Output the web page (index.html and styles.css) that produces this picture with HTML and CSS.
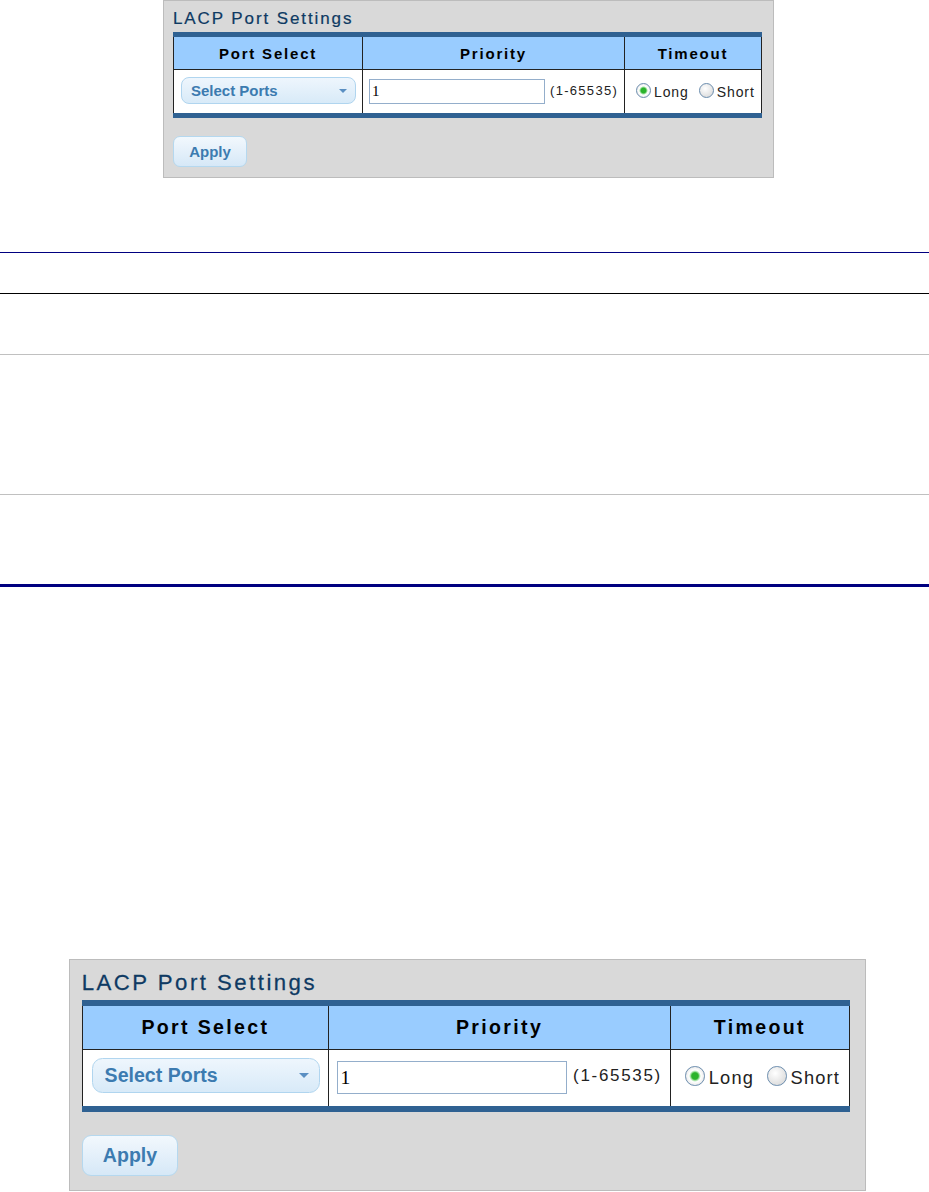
FILE: index.html
```html
<!DOCTYPE html>
<html lang="en">
  <head>
    <meta charset="UTF-8" />
    <meta name="viewport" content="width=device-width, initial-scale=1.0" />
    <title>LACP Port Settings</title>
    <link rel="stylesheet" href="styles.css">
  </head>
  <body>
    <div class="figure figure-sm">
      <div class="panel">
        <h2 class="title">LACP Port Settings</h2>
        <div class="grid-wrap">
          <div class="grid">
            <div class="head">Port Select</div>
            <div class="head">Priority</div>
            <div class="head">Timeout</div>
            <div class="cell">
              <button class="select" type="button">Select Ports</button>
            </div>
            <div class="cell">
              <input class="field" type="text" value="1" />
              <span class="range">(1-65535)</span>
            </div>
            <div class="cell">
              <label class="radio"><input type="radio" name="t1" checked />Long</label>
              <label class="radio"><input type="radio" name="t1" />Short</label>
            </div>
          </div>
        </div>
        <button class="apply" type="button">Apply</button>
      </div>
    </div>

    <div class="doc">
      <div class="doc-head"></div>
      <div class="doc-row row-a"></div>
      <div class="doc-row row-b"></div>
      <div class="doc-row row-c"></div>
    </div>

    <div class="figure figure-lg">
      <div class="panel">
        <h2 class="title">LACP Port Settings</h2>
        <div class="grid-wrap">
          <div class="grid">
            <div class="head">Port Select</div>
            <div class="head">Priority</div>
            <div class="head">Timeout</div>
            <div class="cell">
              <button class="select" type="button">Select Ports</button>
            </div>
            <div class="cell">
              <input class="field" type="text" value="1" />
              <span class="range">(1-65535)</span>
            </div>
            <div class="cell">
              <label class="radio"><input type="radio" name="t2" checked />Long</label>
              <label class="radio"><input type="radio" name="t2" />Short</label>
            </div>
          </div>
        </div>
        <button class="apply" type="button">Apply</button>
      </div>
    </div>
  </body>
</html>
```

FILE: styles.css
```css
* {
  box-sizing: border-box;
}
body {
  margin: 0;
  background: #fff;
  font-family: "Liberation Sans", Arial, sans-serif;
}

.figure-sm {
  padding-left: 163px;
}
.figure-lg {
  padding-top: 372px;
  padding-left: 69px;
}
.figure-lg .panel {
  zoom: 1.305;
}

.panel {
  width: 611px;
  height: 178px;
  background: #d9d9d9;
  border: 1px solid #bcbcbc;
  padding: 8px 0 0 9px;
}
.title {
  margin: 0 0 3px;
  font-size: 17px;
  line-height: 20px;
  font-weight: normal;
  letter-spacing: 1.9px;
  color: #0e3a63;
  -webkit-text-stroke: 0.2px #0e3a63;
}

.grid-wrap {
  width: 589px;
  border-top: 5px solid #2f6192;
  border-bottom: 5px solid #2f6192;
}
.grid {
  display: grid;
  grid-template-columns: 188px 262px 137px;
  border-left: 1px solid #222;
  border-right: 1px solid #222;
}
.head {
  height: 33px;
  background: #99ccff;
  border-bottom: 1px solid #222;
  display: flex;
  align-items: center;
  justify-content: center;
  font-size: 15px;
  font-weight: bold;
  letter-spacing: 1.8px;
  color: #000;
}
.cell {
  height: 43px;
  background: #fff;
  display: flex;
  align-items: center;
}
.head + .head,
.cell + .cell {
  border-left: 1px solid #222;
}

.select {
  position: relative;
  width: 175px;
  height: 27px;
  margin: -3px 0 0 7px;
  padding: 0 0 0 9px;
  text-align: left;
  border: 1px solid #b0d5ef;
  border-radius: 8px;
  background: linear-gradient(#eef6fd, #d8eaf8);
  font-family: "Liberation Sans", Arial, sans-serif;
  font-size: 15px;
  font-weight: bold;
  color: #3c7bb0;
}
.select::after {
  content: "";
  position: absolute;
  right: 8px;
  top: 11px;
  border-left: 4px solid transparent;
  border-right: 4px solid transparent;
  border-top: 4px solid #5a8fc2;
}

.field {
  width: 176px;
  height: 25px;
  margin: 0 5px 0 6px;
  padding: 0 2px;
  border: 1px solid #94aecb;
  font-family: "Liberation Serif", "Times New Roman", serif;
  font-size: 15px;
  color: #000;
}
.range {
  margin-top: -3px;
  font-size: 13px;
  letter-spacing: 1.3px;
  color: #222;
}

.radio {
  display: flex;
  align-items: center;
  font-size: 14px;
  letter-spacing: 0.9px;
  color: #222;
  margin-left: 11px;
}
.radio + .radio {
  margin-left: 10px;
}
.radio input {
  appearance: none;
  width: 15px;
  height: 15px;
  margin: -2px 3px 0 0;
  border: 1px solid #6a8cad;
  border-radius: 50%;
  background: radial-gradient(circle at 40% 35%, #fff, #d3d3d3);
}
.radio input:checked {
  background: radial-gradient(circle, #2bb32b 0 2.5px, #a5e2a5 3.5px, #fff 4.5px, #d8d8d8 100%);
}

.apply {
  width: 74px;
  height: 31px;
  margin-top: 18px;
  border: 1px solid #b5d8ef;
  border-radius: 7px;
  background: linear-gradient(#f2f8fd, #d6e8f7);
  font-family: "Liberation Sans", Arial, sans-serif;
  font-size: 15px;
  font-weight: bold;
  color: #3c7bb0;
}

.doc {
  margin-top: 74px;
  border-top: 1px solid #000080;
  border-bottom: 3px solid #000080;
}
.doc-head {
  height: 41px;
  border-bottom: 1px solid #000;
}
.doc-row {
  border-bottom: 1px solid #c0c0c0;
}
.row-a {
  height: 61px;
}
.row-b {
  height: 140px;
}
.row-c {
  height: 89px;
  border-bottom: none;
}
```
